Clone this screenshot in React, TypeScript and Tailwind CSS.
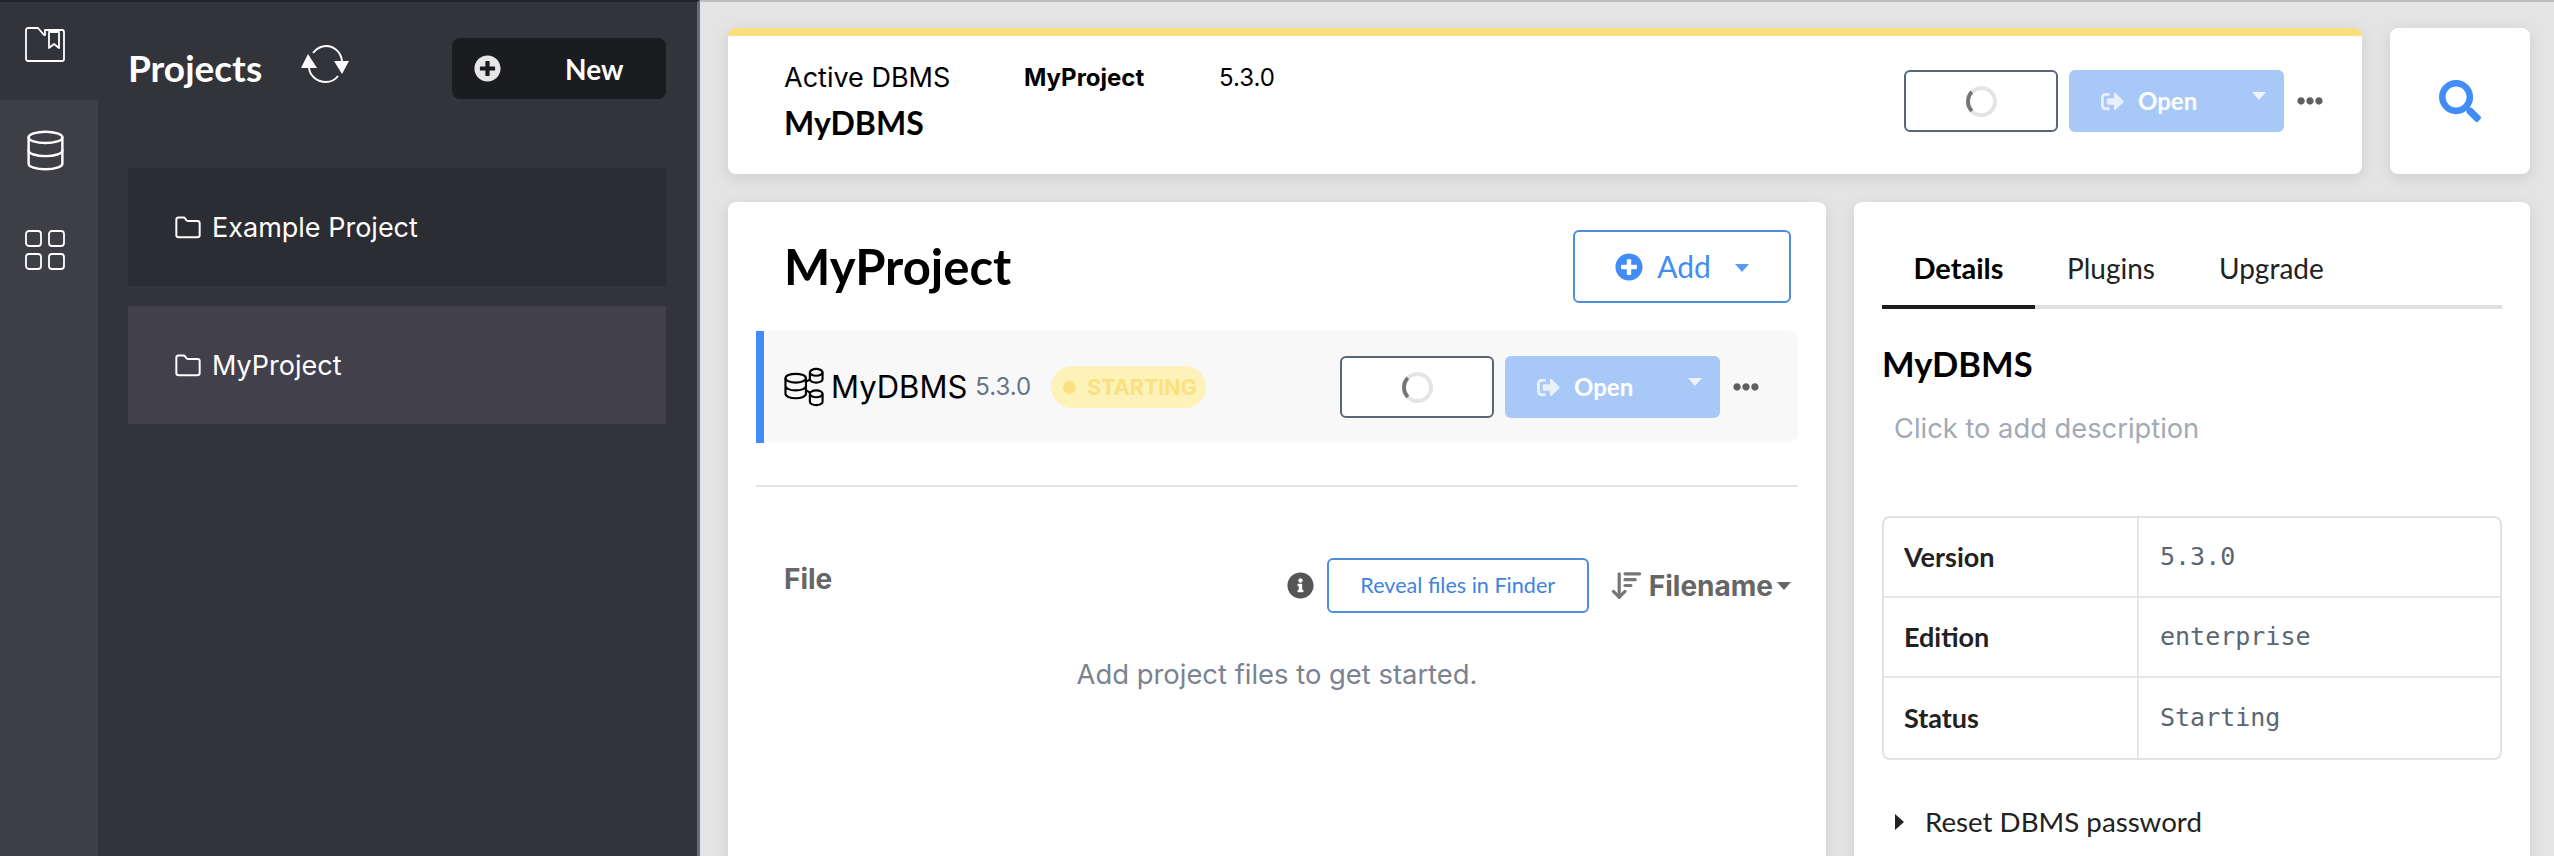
import { ArrowDownWideNarrow, Database, Folder } from "lucide-react";
import { FaEllipsisH, FaInfoCircle, FaPlusCircle, FaSearch, FaSignOutAlt } from "react-icons/fa";

const inter = "font-['Inter',sans-serif]";
const lato = "font-['Lato',sans-serif]";

function ProjectsIcon() {
  return (
    <svg viewBox="0 0 40 36" className="w-10 h-9" fill="none" stroke="white" strokeWidth="1.8" strokeLinejoin="round">
      <path d="M1 4a2 2 0 0 1 2-2h10l6 7h1V4h17a2 2 0 0 1 2 2v27a2 2 0 0 1-2 2H3a2 2 0 0 1-2-2z" />
      <path d="M24 6h10v16l-5-4-5 4z" fill="#33343a" />
    </svg>
  );
}

function GridIcon() {
  return (
    <svg viewBox="0 0 40 40" className="w-10 h-10" fill="none" stroke="white" strokeWidth="1.8">
      <rect x="1" y="1" width="15" height="15" rx="3" />
      <rect x="24" y="1" width="15" height="15" rx="3" />
      <rect x="1" y="24" width="15" height="15" rx="3" />
      <rect x="24" y="24" width="15" height="15" rx="3" />
    </svg>
  );
}

function SyncIcon() {
  return (
    <svg viewBox="0 0 48 38" className="w-12 h-[38px]" fill="none" stroke="white" strokeWidth="2">
      <path d="M12 8C16 3 20 1 25 1c8 0 15 6 16 15" />
      <path d="M37 31c-3 4-7 6-12 6-9 0-16-6-17-14" />
      <path d="M7 9l9 14H0z" fill="white" stroke="none" />
      <path d="M41 29l-8-13h15z" fill="white" stroke="none" />
    </svg>
  );
}

function DbmsIcon() {
  return (
    <svg viewBox="0 0 42 40" className="w-[41px] h-[40px] shrink-0" fill="none" stroke="black" strokeWidth="2.2">
      <ellipse cx="12" cy="11" rx="10.5" ry="4.5" />
      <path d="M1.5 11v16c0 2.5 4.5 4.5 10.5 4.5s10.5-2 10.5-4.5V11M1.5 19c0 2.5 4.5 4.5 10.5 4.5s10.5-2 10.5-4.5" />
      <ellipse cx="33" cy="5" rx="6.5" ry="3.5" />
      <path d="M26.5 5v7c0 2 3 3.5 6.5 3.5s6.5-1.5 6.5-3.5V5" />
      <ellipse cx="33" cy="27" rx="6.5" ry="3.5" />
      <path d="M26.5 27v8c0 2 3 3.5 6.5 3.5s6.5-1.5 6.5-3.5v-8M22 15l5-3M22 23l5 3" />
    </svg>
  );
}

function Spinner() {
  return <span className="block w-[31px] h-[31px] rounded-full border-[4px] border-[#e4e4e4] border-l-[#767676]" />;
}

function Caret({ className }: { className: string }) {
  return <span className={`w-0 h-0 border-x-[7px] border-x-transparent border-t-[8px] ${className}`} />;
}

function DbmsActions() {
  return (
    <div className="flex items-center">
      <button className="w-[154px] h-[62px] rounded-[6px] border-2 border-[#5b6675] bg-white flex items-center justify-center">
        <Spinner />
      </button>
      <button className={`ml-[11px] w-[215px] h-[62px] rounded-[6px] bg-[#a8c9f8] text-white flex items-center pl-[32px] pr-[18px] ${lato} font-bold text-[24px]`}>
        <FaSignOutAlt className="w-[23px] h-[23px] text-[#e8f0fc]" />
        <span className="ml-[14px]">Open</span>
        <Caret className="ml-auto mb-[10px] border-t-white/80" />
      </button>
      <FaEllipsisH className="ml-[10px] w-[32px] h-[26px] text-[#5f5f5f]" />
    </div>
  );
}

function ProjectItem({ name, active }: { name: string; active?: boolean }) {
  return (
    <div className={`h-[118px] flex items-center pl-[45px] pt-[2px] gap-[9px] ${active ? "bg-[#42414b]" : "bg-[#2c2d32]"}`}>
      <Folder className="w-[30px] h-[28px] text-white" strokeWidth={1.7} />
      <span className={`${inter} text-[27px] text-white`}>{name}</span>
    </div>
  );
}

function InfoRow({ label, value, last }: { label: string; value: string; last?: boolean }) {
  return (
    <div className={`flex h-[80px] ${last ? "" : "border-b-2 border-[#e6e6e6]"}`}>
      <div className={`w-[255px] border-r-2 border-[#e6e6e6] flex items-center pl-[20px] ${lato} font-bold text-[27px] text-[#222]`}>
        {label}
      </div>
      <div className="flex-1 flex items-center pl-[21px] font-['DejaVu_Sans_Mono',monospace] text-[25px] text-[#5b6675]">
        {value}
      </div>
    </div>
  );
}

export default function App() {
  return (
    <div className="flex h-[856px] w-[2554px] overflow-hidden bg-[#e4e4e4]">
      <div className="w-[700px] shrink-0 flex border-t-2 border-[#20222c] border-r-[3px] border-r-[#666b78] bg-[#33343a]">
        <div className="w-[98px] shrink-0 bg-[#3e3e47] flex flex-col">
          <div className="h-[98px] bg-[#33343a] flex items-center justify-center pr-[8px] pb-[15px]">
            <ProjectsIcon />
          </div>
          <div className="h-[100px] flex items-center justify-center pr-[8px]">
            <Database className="w-[45px] h-[45px] text-white" strokeWidth={1.3} />
          </div>
          <div className="h-[100px] flex items-center justify-center pr-[8px]">
            <GridIcon />
          </div>
        </div>

        <div className="w-[568px] pl-[30px]">
          <div className="h-[96px] flex items-start pt-[36px]">
            <div className={`${lato} w-[173px] font-bold text-[37px] leading-[60px] text-white`}>Projects</div>
            <div className="pt-[7px]">
              <SyncIcon />
            </div>
            <button className="ml-auto w-[214px] h-[61px] rounded-[8px] bg-[#1b1c1f] flex items-center pl-[22px]">
              <FaPlusCircle className="w-[27px] h-[27px] text-[#e6e6e6]" />
              <span className={`${lato} font-bold text-[28px] text-white ml-[64px]`}>New</span>
            </button>
          </div>
          <div className="mt-[70px] flex flex-col gap-[20px]">
            <ProjectItem name="Example Project" />
            <ProjectItem name="MyProject" active />
          </div>
        </div>
      </div>

      <div className="flex-1 border-t-2 border-[#bdbdbd] pl-[28px] pr-[24px] pt-[26px]">
        <div className="flex gap-[28px]">
          <div className="flex-1 h-[146px] rounded-[8px] bg-white border-t-8 border-[#fbdf7c] shadow-[0_4px_16px_rgba(0,0,0,0.1)] flex pl-[56px] pr-[36px]">
            <div className="flex-1 pt-[23px]">
              <div className="flex items-center h-[38px]">
                <span className={`${inter} text-[27px] text-black w-[240px]`}>Active DBMS</span>
                <span className={`${inter} font-bold text-[24px] text-black w-[195px]`}>MyProject</span>
                <span className={`${inter} text-[24px] text-black`}>5.3.0</span>
              </div>
              <div className={`${lato} font-bold text-[32px] leading-[44px] text-black mt-[4px]`}>MyDBMS</div>
            </div>
            <div className="pt-[34px]">
              <DbmsActions />
            </div>
          </div>
          <div className="w-[140px] h-[146px] rounded-[8px] bg-white shadow-[0_4px_16px_rgba(0,0,0,0.1)] flex items-center justify-center">
            <FaSearch className="w-[42px] h-[42px] text-[#418cf5]" />
          </div>
        </div>

        <div className="flex gap-[28px] mt-[28px]">
          <div className="w-[1098px] h-[700px] rounded-[8px] bg-white shadow-[0_4px_16px_rgba(0,0,0,0.1)] pt-[28px] pl-[28px] pr-[28px]">
            <div className="flex items-center justify-between h-[73px] pl-[28px] pr-[7px]">
              <h1 className={`${lato} font-bold text-[49px] text-black`}>MyProject</h1>
              <button className={`w-[218px] h-[73px] rounded-[6px] border-2 border-[#4f8ddf] flex items-center justify-center gap-[14px] ${lato} text-[30px] text-[#418cf5]`}>
                <FaPlusCircle className="w-[28px] h-[28px]" />
                <span>Add</span>
                <Caret className="ml-[10px] mt-[3px] border-t-[#5a9af5]" />
              </button>
            </div>

            <div className="mt-[28px] h-[112px] rounded-r-[10px] bg-[#f8f8f9] border-l-8 border-[#418cf5] flex items-center pl-[20px]">
              <DbmsIcon />
              <span className={`${inter} text-[31px] text-black ml-[6px]`}>MyDBMS</span>
              <span className={`${inter} text-[24px] text-[#667484] ml-[8px]`}>5.3.0</span>
              <span className={`ml-[20px] w-[155px] h-[42px] rounded-full bg-[#fdf2b8] flex items-center pl-[12px] gap-[11px] ${inter} font-bold text-[21.5px] text-[#fbe07f]`}>
                <span className="w-[13px] h-[13px] rounded-full bg-[#fbe07f]" />
                STARTING
              </span>
              <div className="ml-auto pr-[36px]">
                <DbmsActions />
              </div>
            </div>

            <div className="mt-[42px] border-t-2 border-[#e4e4e4]" />

            <div className="mt-[71px] flex pl-[28px]">
              <div className={`${inter} font-bold text-[28px] text-[#666] mt-[0px]`}>File</div>
              <div className="ml-auto flex items-center h-[55px] mr-[7px]">
                <FaInfoCircle className="w-[27px] h-[27px] text-[#555]" />
                <button className={`ml-[13px] w-[262px] h-[55px] rounded-[6px] border-2 border-[#4f8ddf] ${lato} text-[21.6px] text-[#3f83e0]`}>
                  Reveal files in Finder
                </button>
                <ArrowDownWideNarrow className="ml-[20px] w-[35px] h-[35px] text-[#777]" strokeWidth={2.2} />
                <span className={`${inter} font-bold text-[28px] text-[#666] ml-[5px]`}>Filename</span>
                <Caret className="ml-[4px] border-t-[#666]" />
              </div>
            </div>
            <p className={`${inter} mt-[41px] text-center text-[27.4px] text-[#7b8290]`}>Add project files to get started.</p>
          </div>

          <div className="flex-1 h-[700px] rounded-[8px] bg-white shadow-[0_4px_16px_rgba(0,0,0,0.1)] pt-[28px] px-[28px]">
            <div className="flex h-[79px] border-b-4 border-[#e0e0e0]">
              <div className={`w-[153px] h-[79px] border-b-4 border-[#1c1c1c] flex items-center justify-center ${lato} font-bold text-[29px] text-black`}>Details</div>
              <div className={`ml-[32px] flex items-center h-[75px] ${lato} text-[28px] text-[#222]`}>Plugins</div>
              <div className={`ml-[64px] flex items-center h-[75px] ${lato} text-[28px] text-[#222]`}>Upgrade</div>
            </div>
            <h2 className={`${lato} font-bold text-[34.5px] leading-[48px] text-black mt-[31px]`}>MyDBMS</h2>
            <p className={`${inter} text-[27.3px] leading-[40px] text-[#a3aab3] pl-[12px] mt-[21px]`}>Click to add description</p>
            <div className="mt-[67px] rounded-[8px] border-2 border-[#e2e2e2]">
              <InfoRow label="Version" value="5.3.0" />
              <InfoRow label="Edition" value="enterprise" />
              <InfoRow label="Status" value="Starting" last />
            </div>
            <div className="flex items-center mt-[41px] pl-[13px]">
              <span className="w-0 h-0 border-y-[8px] border-y-transparent border-l-[9px] border-l-[#222]" />
              <span className={`${lato} text-[27.7px] text-[#222] ml-[21px]`}>Reset DBMS password</span>
            </div>
          </div>
        </div>
      </div>
    </div>
  );
}
